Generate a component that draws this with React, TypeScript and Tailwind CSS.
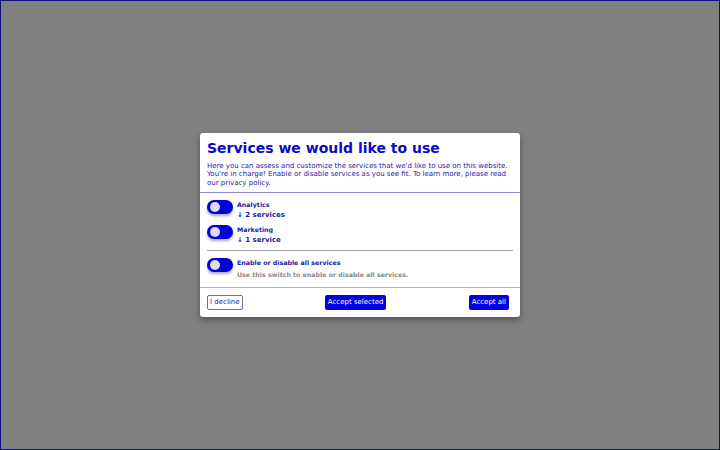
import React from 'react';

const font = { fontFamily: '"DejaVu Sans", sans-serif' };

const Toggle: React.FC = () => (
  <div className="relative w-[26px] h-[14px] shrink-0 rounded-full bg-[#0000d8] shadow-[0_2px_3px_rgba(0,0,80,0.35)]">
    <div className="absolute left-[3px] top-[2px] w-[10px] h-[10px] rounded-full bg-[#dcdcea]" />
  </div>
);

interface ServiceRowProps {
  title: string;
  count: string;
}

const ServiceRow: React.FC<ServiceRowProps> = ({ title, count }) => (
  <div className="flex items-start gap-[4px]">
    <Toggle />
    <div className="flex flex-col">
      <span className="text-[6.3px] leading-[10px] font-bold text-[#1a1aa8]">{title}</span>
      <span className="text-[7px] leading-[10px] font-bold text-[#1a1aa8]">↓ {count}</span>
    </div>
  </div>
);

export default function App() {
  return (
    <div
      className="w-[720px] h-[450px] border border-[#10107a] bg-[#808080] flex items-center justify-center"
      style={font}
    >
      <div className="w-[320px] h-[184px] bg-white rounded-[3px] shadow-[0_3px_6px_rgba(0,0,0,0.35)] flex flex-col">
        <div className="h-[60px] px-[7px] pt-[6px] border-b border-[#8a8ad8]">
          <h1 className="text-[14px] leading-[18px] font-bold text-[#0a0ac8]">Services we would like to use</h1>
          <p className="mt-[5px] text-[7px] leading-[8.3px] text-[#1a1aa8]">
            Here you can assess and customize the services that we'd like to use on this website.
            You're in charge! Enable or disable services as you see fit. To learn more, please read
            our privacy policy.
          </p>
        </div>
        <div className="px-[7px] pt-[7px] flex flex-col gap-[5px]">
          <ServiceRow title="Analytics" count="2 services" />
          <ServiceRow title="Marketing" count="1 service" />
        </div>
        <div className="mx-[7px] mt-[5px] border-t border-[#a0a0a8]" />
        <div className="h-[36px] px-[7px] pt-[7px] flex items-start gap-[4px]">
          <Toggle />
          <div className="flex flex-col">
            <span className="text-[6.3px] leading-[10px] font-bold text-[#1a1aa8]">Enable or disable all services</span>
            <span className="mt-[2px] text-[6.3px] leading-[10px] font-bold text-[#8a8a8a]">
              Use this switch to enable or disable all services.
            </span>
          </div>
        </div>
        <div className="border-t border-[#b0b0b8]" />
        <div className="flex-1 pl-[7px] pr-[11px] flex items-center justify-between">
          <button className="h-[15px] px-[2px] rounded-[2px] border border-[#6a6ab8] bg-white text-[7px] text-[#1a1aa8]">
            I decline
          </button>
          <button className="h-[15px] px-[3px] rounded-[2px] bg-[#0000e0] text-[7px] text-white">
            Accept selected
          </button>
          <button className="h-[15px] px-[3px] rounded-[2px] bg-[#0000e0] text-[7px] text-white">
            Accept all
          </button>
        </div>
      </div>
    </div>
  );
}
